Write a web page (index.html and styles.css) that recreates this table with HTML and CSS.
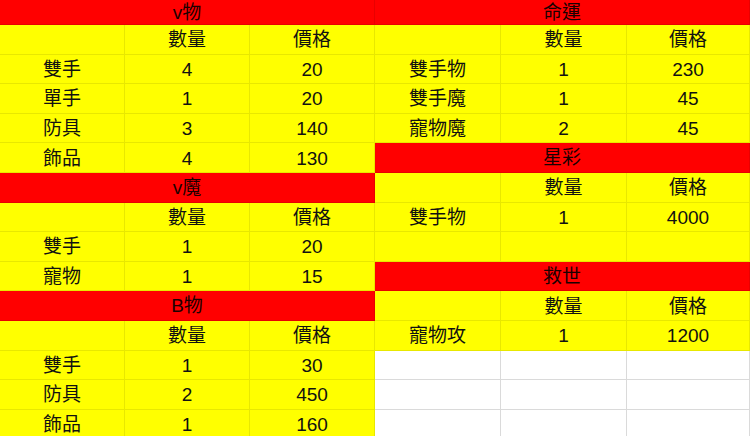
FILE: index.html
```html
<!DOCTYPE html>
<html lang="zh-Hant">
<head>
<meta charset="utf-8">
<title>價格表</title>
<link rel="stylesheet" href="styles.css">
</head>
<body>
<div class="sheet">
  <div class="half left">
    <div class="cell title">v物</div>
    <div class="cell y"></div><div class="cell y">數量</div><div class="cell y">價格</div>
    <div class="cell y">雙手</div><div class="cell y">4</div><div class="cell y">20</div>
    <div class="cell y">單手</div><div class="cell y">1</div><div class="cell y">20</div>
    <div class="cell y">防具</div><div class="cell y">3</div><div class="cell y">140</div>
    <div class="cell y">飾品</div><div class="cell y">4</div><div class="cell y">130</div>
    <div class="cell title">v魔</div>
    <div class="cell y"></div><div class="cell y">數量</div><div class="cell y">價格</div>
    <div class="cell y">雙手</div><div class="cell y">1</div><div class="cell y">20</div>
    <div class="cell y">寵物</div><div class="cell y">1</div><div class="cell y">15</div>
    <div class="cell title">B物</div>
    <div class="cell y"></div><div class="cell y">數量</div><div class="cell y">價格</div>
    <div class="cell y">雙手</div><div class="cell y">1</div><div class="cell y">30</div>
    <div class="cell y">防具</div><div class="cell y">2</div><div class="cell y">450</div>
    <div class="cell y">飾品</div><div class="cell y">1</div><div class="cell y">160</div>
  </div>
  <div class="half right">
    <div class="cell title">命運</div>
    <div class="cell y"></div><div class="cell y">數量</div><div class="cell y">價格</div>
    <div class="cell y">雙手物</div><div class="cell y">1</div><div class="cell y">230</div>
    <div class="cell y">雙手魔</div><div class="cell y">1</div><div class="cell y">45</div>
    <div class="cell y">寵物魔</div><div class="cell y">2</div><div class="cell y">45</div>
    <div class="cell title">星彩</div>
    <div class="cell y"></div><div class="cell y">數量</div><div class="cell y">價格</div>
    <div class="cell y">雙手物</div><div class="cell y">1</div><div class="cell y">4000</div>
    <div class="cell y"></div><div class="cell y"></div><div class="cell y"></div>
    <div class="cell title">救世</div>
    <div class="cell y"></div><div class="cell y">數量</div><div class="cell y">價格</div>
    <div class="cell y">寵物攻</div><div class="cell y">1</div><div class="cell y">1200</div>
    <div class="cell w"></div><div class="cell w"></div><div class="cell w"></div>
    <div class="cell w"></div><div class="cell w"></div><div class="cell w"></div>
    <div class="cell w"></div><div class="cell w"></div><div class="cell w"></div>
  </div>
</div>
</body>
</html>
```
FILE: styles.css
```css
html, body {
  margin: 0;
  padding: 0;
  background: #ffffff;
}
body {
  width: 750px;
  height: 436px;
  overflow: hidden;
  font-family: "Liberation Sans", "Noto Sans CJK TC", sans-serif;
  font-size: 19px;
  color: #111111;
}
.sheet {
  display: flex;
  width: 750px;
}
.half {
  display: grid;
  grid-template-rows: 25px repeat(14, 29.6px);
}
.left {
  width: 375px;
  grid-template-columns: 125px 125px 125px;
}
.right {
  width: 375px;
  grid-template-columns: 126px 126px 123px;
}
.cell {
  box-sizing: border-box;
  display: flex;
  align-items: center;
  justify-content: center;
  padding-top: 1px;
  border-right: 1px solid rgba(0, 0, 0, 0.09);
  border-bottom: 1px solid rgba(0, 0, 0, 0.09);
  white-space: nowrap;
  line-height: 1;
}
.y {
  background: #ffff00;
}
.w {
  background: #ffffff;
  border-color: #dadada;
}
.title {
  grid-column: 1 / 4;
  padding-top: 0;
  background: #ff0000;
  color: #1a0000;
}
```
